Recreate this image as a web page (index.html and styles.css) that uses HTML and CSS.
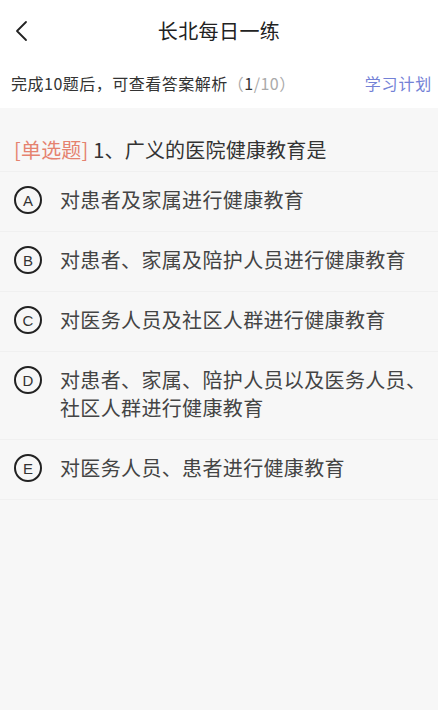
FILE: index.html
```html
<!DOCTYPE html>
<html lang="zh">
<head>
<meta charset="utf-8">
<link rel="stylesheet" href="styles.css">
</head>
<body>
<div class="page">
  <header class="nav">
    <span class="back">
      <svg width="14" height="22" viewBox="0 0 14 22"><path d="M12 2 L3 11 L12 20" fill="none" stroke="#222" stroke-width="1.8" stroke-linecap="round" stroke-linejoin="round"/></svg>
    </span>
    <h1 class="title">长北每日一练</h1>
  </header>
  <div class="sub">
    <span class="tip">完成10题后，可查看答案解析<span class="count">（<b>1</b>/10）</span></span>
    <span class="plan">学习计划</span>
  </div>
  <main class="quiz">
    <div class="question"><span class="tag">[单选题]</span> 1、广义的医院健康教育是</div>
    <div class="opt"><span class="letter">A</span><span class="txt">对患者及家属进行健康教育</span></div>
    <div class="opt"><span class="letter">B</span><span class="txt">对患者、家属及陪护人员进行健康教育</span></div>
    <div class="opt"><span class="letter">C</span><span class="txt">对医务人员及社区人群进行健康教育</span></div>
    <div class="opt"><span class="letter">D</span><span class="txt">对患者、家属、陪护人员以及医务人员、社区人群进行健康教育</span></div>
    <div class="opt"><span class="letter">E</span><span class="txt">对医务人员、患者进行健康教育</span></div>
  </main>
</div>
</body>
</html>
```
FILE: styles.css
```css
html, body {
  margin: 0;
  padding: 0;
  background: #f7f7f7;
}
body {
  font-family: "Noto Sans CJK SC", "Noto Sans", sans-serif;
  color: #333;
}
.page {
  width: 438px;
  min-height: 710px;
  background: #f7f7f7;
}
.nav {
  position: relative;
  height: 60px;
  background: #fff;
  display: flex;
  align-items: center;
  justify-content: center;
}
.back {
  position: absolute;
  left: 14px;
  top: 20px;
  display: flex;
}
.title {
  margin: 0;
  font-size: 20px;
  font-weight: 400;
  color: #222;
  letter-spacing: 0.4px;
}
.sub {
  height: 51px;
  background: #fff;
  display: flex;
  align-items: center;
  justify-content: space-between;
  padding: 0 6px 0 11px;
  font-size: 16px;
  margin-top: -3px;
}
.tip { color: #333; letter-spacing: 0.5px; }
.count { color: #aaa; }
.count b { font-weight: 400; color: #333; }
.plan { color: #7381d6; letter-spacing: 0.8px; }
.quiz {
  padding-top: 21px;
}
.question {
  padding: 7px 14px 7px;
  font-size: 20px;
  line-height: 28px;
  color: #333;
  letter-spacing: 0.2px;
  border-bottom: 1px solid #f0f0f0;
}
.tag { color: #e5826f; }
.opt {
  display: flex;
  align-items: flex-start;
  padding: 14px 8px 17px 14px;
  border-bottom: 1px solid #f0f0f0;
}
.letter {
  flex: none;
  box-sizing: border-box;
  width: 28px;
  height: 28px;
  border: 2px solid #222;
  border-radius: 50%;
  display: flex;
  align-items: center;
  justify-content: center;
  font-family: "Liberation Sans", Arial, sans-serif;
  font-size: 15px;
  color: #333;
}
.txt {
  margin-left: 18px;
  width: 370px;
  font-size: 20px;
  line-height: 28px;
  color: #444;
  letter-spacing: 0.35px;
}
```
